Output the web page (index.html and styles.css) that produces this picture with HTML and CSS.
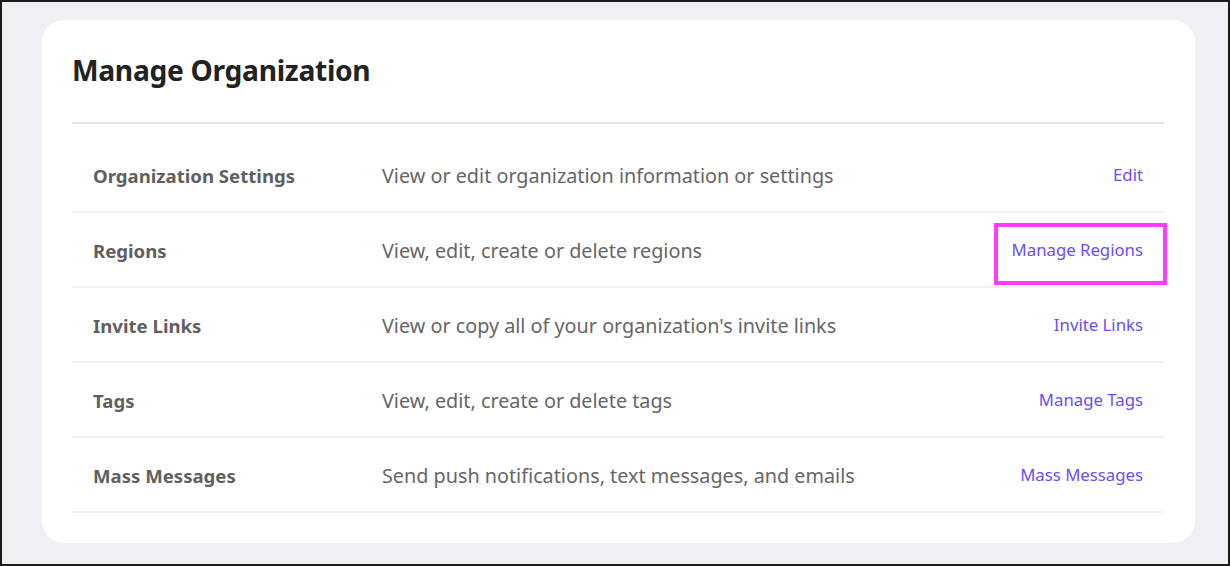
FILE: index.html
```html
<!DOCTYPE html>
<html lang="en">
<head>
<meta charset="utf-8">
<title>Manage Organization</title>
<link rel="stylesheet" href="styles.css">
</head>
<body>
<div class="frame">
  <section class="card">
    <h1 class="title">Manage Organization</h1>
    <div class="divider"></div>
    <ul class="rows">
      <li class="row">
        <span class="label">Organization Settings</span>
        <span class="desc">View or edit organization information or settings</span>
        <a class="link" href="#">Edit</a>
      </li>
      <li class="row">
        <span class="label">Regions</span>
        <span class="desc">View, edit, create or delete regions</span>
        <a class="link highlight" href="#">Manage Regions</a>
      </li>
      <li class="row">
        <span class="label">Invite Links</span>
        <span class="desc">View or copy all of your organization's invite links</span>
        <a class="link" href="#">Invite Links</a>
      </li>
      <li class="row">
        <span class="label">Tags</span>
        <span class="desc">View, edit, create or delete tags</span>
        <a class="link" href="#">Manage Tags</a>
      </li>
      <li class="row">
        <span class="label">Mass Messages</span>
        <span class="desc">Send push notifications, text messages, and emails</span>
        <a class="link" href="#">Mass Messages</a>
      </li>
    </ul>
  </section>
</div>
</body>
</html>
```
FILE: styles.css
```css
* { box-sizing: border-box; }
html, body { margin: 0; padding: 0; }
body {
  font-family: "Noto Sans", "Open Sans", sans-serif;
  background: #eff0f4;
}
.frame {
  width: 1230px;
  height: 566px;
  border: 2px solid #1c1c1c;
  background: #eff0f4;
  padding: 18px 33px 0 40px;
}
.card {
  width: 1153px;
  height: 523px;
  background: #ffffff;
  border-radius: 22px;
  padding: 32px 31px 0 30px;
}
.title {
  margin: 0;
  font-size: 28.2px;
  line-height: 36px;
  font-weight: 700;
  color: #222222;
  letter-spacing: -0.3px;
}
.divider {
  margin-top: 34px;
  height: 2px;
  background: #e4e4e6;
}
.rows {
  list-style: none;
  margin: 14px 0 0;
  padding: 0;
}
.row {
  display: flex;
  align-items: center;
  height: 75px;
  padding: 1px 21px 0;
  border-bottom: 2px solid #f1f1f3;
}
.label {
  width: 289px;
  flex: none;
  font-size: 18.6px;
  font-weight: 700;
  color: #5f5f5f;
}
.desc {
  flex: 1;
  font-size: 19.8px;
  color: #666666;
}
.link {
  position: relative;
  font-size: 16.75px;
  line-height: 22px;
  color: #6b4ef6;
  text-decoration: none;
}
.highlight::after {
  content: "";
  position: absolute;
  left: -18px;
  right: -24px;
  top: -16px;
  bottom: -24px;
  border: 4px solid #ff3cff;
}
```
